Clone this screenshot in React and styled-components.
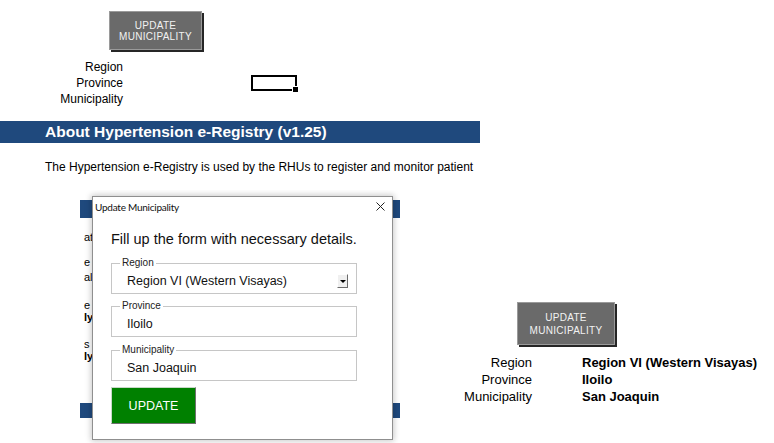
import React from "react";
import styled, { createGlobalStyle } from "styled-components";

const GlobalStyle = createGlobalStyle`
  body {
    margin: 0;
    background: #ffffff;
    font-family: "Liberation Sans", Arial, sans-serif;
    color: #000;
  }
`;

const Page = styled.div`
  width: 774px;
  height: 443px;
  overflow: hidden;
`;

/* ---------- sheet area (top) ---------- */

const Sheet = styled.div`
  width: 480px;
`;

const ButtonRow = styled.div`
  display: flex;
  padding: ${(p) => p.$pad};
`;

const MacroButton = styled.div`
  box-sizing: border-box;
  width: ${(p) => p.$w}px;
  height: ${(p) => p.$h}px;
  background: #6a6a6a;
  border: 1px solid #9a9a9a;
  box-shadow: 2px 2px 0 #262626;
  color: #f2f2f2;
  font-size: 10px;
  line-height: ${(p) => p.$lh}px;
  letter-spacing: 0.3px;
  display: flex;
  flex-direction: column;
  align-items: center;
  justify-content: center;
  text-align: center;
`;

const InfoGrid = styled.div`
  display: grid;
  grid-template-columns: ${(p) => p.$cols};
  grid-auto-rows: ${(p) => p.$row}px;
  align-items: center;
  font-size: ${(p) => p.$size}px;
  margin-top: ${(p) => p.$top}px;
`;

const Label = styled.div`
  text-align: right;
  white-space: nowrap;
`;

const Value = styled.div`
  margin-left: 50px;
  font-weight: bold;
  white-space: nowrap;
`;

const CellBox = styled.div`
  position: relative;
  box-sizing: border-box;
  width: 46px;
  height: 16px;
  border: 2px solid #000;

  &::after {
    content: "";
    position: absolute;
    right: -4px;
    bottom: -4px;
    width: 5px;
    height: 5px;
    background: #000;
    border: 1px solid #fff;
  }
`;

const Banner = styled.div`
  margin-top: 14px;
  height: 22px;
  background: #1f497d;
  color: #fff;
  font-weight: bold;
  font-size: 15.5px;
  line-height: 22px;
  padding-left: 45px;
  white-space: nowrap;
`;

const Intro = styled.p`
  margin: 17px 0 0;
  padding-left: 45px;
  font-size: 12px;
  line-height: 14px;
  white-space: nowrap;
  overflow: hidden;
`;

/* ---------- lower area ---------- */

const Lower = styled.div`
  display: flex;
  align-items: flex-start;
  margin-top: 16px;
`;

const Snapshot = styled.div`
  position: relative;
  flex: none;
  width: 320px;
  height: 253px;
  margin-left: 80px;
  overflow: hidden;
  background: #fff;
`;

const BackStrip = styled.div`
  height: ${(p) => p.$h}px;
  margin-top: ${(p) => p.$top}px;
  background: #1f497d;
`;

const PeekList = styled.div`
  height: 172px;
  padding-left: 4px;
  font-size: 11px;
  line-height: 12px;
`;

const PeekRow = styled.div`
  height: 12px;
  margin-top: ${(p) => p.$gap}px;
  font-weight: ${(p) => (p.$bold ? "bold" : "normal")};
  white-space: nowrap;
`;

const Dialog = styled.div`
  position: absolute;
  left: 12px;
  top: 6px;
  box-sizing: border-box;
  width: 301px;
  height: 244px;
  background: #fff;
  border: 1px solid #8f8f8f;
  box-shadow: 0 0 6px 1px rgba(0, 0, 0, 0.22);
`;

const TitleBar = styled.div`
  height: 19px;
  display: flex;
  align-items: center;
  justify-content: space-between;
  padding: 0 7px 0 2px;
  font-family: Lato, "Noto Sans", sans-serif;
  font-size: 10px;
  letter-spacing: -0.25px;
  color: #111;
`;

const DialogBody = styled.div`
  padding-left: 18px;
`;

const Heading = styled.div`
  margin-top: 15px;
  font-size: 14.5px;
  line-height: 17px;
  color: #111;
  white-space: nowrap;
`;

const Field = styled.div`
  position: relative;
  box-sizing: border-box;
  width: 246px;
  height: 31px;
  margin-top: ${(p) => p.$top}px;
  padding: 4px 8px 0 15px;
  border: 1px solid #c6c6c6;
  display: flex;
  align-items: center;
`;

const FieldLegend = styled.span`
  position: absolute;
  left: 8px;
  top: -7px;
  padding: 0 2px;
  background: #fff;
  font-size: 10px;
  line-height: 12px;
  color: #222;
`;

const FieldValue = styled.div`
  flex: 1;
  font-size: 12.5px;
  color: #111;
  white-space: nowrap;
`;

const DropButton = styled.div`
  box-sizing: border-box;
  width: 11px;
  height: 14px;
  background: #f0f0f0;
  border: 1px solid;
  border-color: #fff #6b6b6b #6b6b6b #fff;
  display: flex;
  align-items: center;
  justify-content: center;

  &::before {
    content: "";
    border-left: 3px solid transparent;
    border-right: 3px solid transparent;
    border-top: 3px solid #000;
    margin-top: 1px;
  }
`;

const GreenButton = styled.div`
  box-sizing: border-box;
  width: 85px;
  height: 37px;
  margin-top: 6px;
  background: #008000;
  border: 1px solid;
  border-color: #c8d8c8 #6f6f6f #6f6f6f #c8d8c8;
  color: #fff;
  font-size: 12.5px;
  display: flex;
  align-items: center;
  justify-content: center;
`;

const RightPanel = styled.div`
  margin-left: 50px;
  margin-top: 112px;
`;

const peeks = [
  { text: "at", gap: 13 },
  { text: "e", gap: 13 },
  { text: "al", gap: 3 },
  { text: "e", gap: 16 },
  { text: "ly", gap: 0, bold: true },
  { text: "s", gap: 15 },
  { text: "ly", gap: 0, bold: true },
];

const fields = [
  { legend: "Region", value: "Region VI (Western Visayas)", top: 15, drop: true },
  { legend: "Province", value: "Iloilo", top: 12 },
  { legend: "Municipality", value: "San Joaquin", top: 13 },
];

const summary = [
  ["Region", "Region VI (Western Visayas)"],
  ["Province", "Iloilo"],
  ["Municipality", "San Joaquin"],
];

function CloseIcon() {
  return (
    <svg width="9" height="9" viewBox="0 0 9 9">
      <path d="M0.5 0.5 L8.5 8.5 M8.5 0.5 L0.5 8.5" stroke="#222" strokeWidth="1" />
    </svg>
  );
}

export default function App() {
  return (
    <Page>
      <GlobalStyle />
      <Sheet>
        <ButtonRow $pad="11px 0 0 109px">
          <MacroButton $w={93} $h={39} $lh={11}>
            <span>UPDATE</span>
            <span>MUNICIPALITY</span>
          </MacroButton>
        </ButtonRow>
        <InfoGrid $cols="123px 128px 46px" $row={16} $size={12} $top={9}>
          <Label>Region</Label>
          <div />
          <div />
          <Label>Province</Label>
          <div />
          <CellBox />
          <Label>Municipality</Label>
        </InfoGrid>
        <Banner>About Hypertension e-Registry (v1.25)</Banner>
        <Intro>
          The Hypertension e-Registry is used by the RHUs to register and monitor patient
        </Intro>
      </Sheet>

      <Lower>
        <Snapshot>
          <BackStrip $top={10} $h={18} />
          <PeekList>
            {peeks.map((p, i) => (
              <PeekRow key={i} $gap={p.gap} $bold={p.bold}>
                {p.text}
              </PeekRow>
            ))}
          </PeekList>
          <BackStrip $top={0} $h={15} />

          <Dialog>
            <TitleBar>
              <span>Update Municipality</span>
              <CloseIcon />
            </TitleBar>
            <DialogBody>
              <Heading>Fill up the form with necessary details.</Heading>
              {fields.map((f) => (
                <Field key={f.legend} $top={f.top}>
                  <FieldLegend>{f.legend}</FieldLegend>
                  <FieldValue>{f.value}</FieldValue>
                  {f.drop && <DropButton />}
                </Field>
              ))}
              <GreenButton>UPDATE</GreenButton>
            </DialogBody>
          </Dialog>
        </Snapshot>

        <RightPanel>
          <ButtonRow $pad="0 0 0 67px">
            <MacroButton $w={98} $h={43} $lh={13}>
              <span>UPDATE</span>
              <span>MUNICIPALITY</span>
            </MacroButton>
          </ButtonRow>
          <InfoGrid $cols="82px auto" $row={17} $size={13} $top={9}>
            {summary.map(([label, value]) => (
              <React.Fragment key={label}>
                <Label>{label}</Label>
                <Value>{value}</Value>
              </React.Fragment>
            ))}
          </InfoGrid>
        </RightPanel>
      </Lower>
    </Page>
  );
}
